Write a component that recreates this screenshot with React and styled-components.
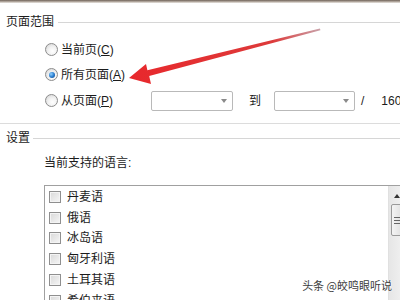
import React from "react";
import styled, { createGlobalStyle } from "styled-components";

const GlobalStyle = createGlobalStyle`
  html, body { margin: 0; padding: 0; background: #fff; }
  body {
    font-family: "Liberation Sans", "Noto Sans CJK SC", sans-serif;
    font-size: 12px;
    color: #1b1b1b;
  }
`;

const Page = styled.div`
  position: relative;
  width: 400px;
  height: 300px;
  overflow: hidden;
  background: #fff;
`;

const TopEdge = styled.div`
  height: 3px;
  background: linear-gradient(to bottom, #6f6258, #b9afa6 60%, #ece8e4);
`;

const GroupHeader = styled.div`
  display: flex;
  align-items: center;
  gap: ${(p) => p.$gap}px;
  height: 16px;
  padding-left: 6px;
  margin-top: ${(p) => p.$top}px;
`;

const HeaderText = styled.span`
  line-height: 16px;
  font-size: 12px;
`;

const HeaderLine = styled.div`
  flex: 1;
  height: 1px;
  background: #d6d6d6;
`;

const RadioGrid = styled.div`
  display: grid;
  grid-template-rows: 25px 25px 27px;
  margin-top: 7px;
`;

const Row = styled.div`
  display: flex;
  align-items: center;
  padding-left: 44px;
`;

const Radio = styled.span`
  position: relative;
  width: 11px;
  height: 11px;
  border-radius: 50%;
  border: 1px solid #8c8c8c;
  background: radial-gradient(circle at 60% 65%, #ffffff 0%, #f1f1f1 45%, #cfcfcf 100%);
  margin-right: 3px;
  margin-left: 1px;
  flex: none;
  display: flex;
  align-items: center;
  justify-content: center;
  &::after {
    content: "";
    display: ${(p) => (p.$checked ? "block" : "none")};
    width: 6px;
    height: 6px;
    border-radius: 50%;
    background: radial-gradient(circle at 35% 35%, #8fd0ff 0%, #2b7fd0 50%, #0e3f80 100%);
  }
`;

const Label = styled.span`
  line-height: 16px;
  min-width: ${(p) => p.$w || 0}px;
  u { text-decoration: underline; }
`;

const Combo = styled.div`
  width: ${(p) => p.$w}px;
  height: 20px;
  border: 1px solid #b9b9b9;
  border-radius: 2px;
  background: #fff;
  display: flex;
  align-items: center;
  justify-content: flex-end;
  padding-right: 5px;
  box-sizing: border-box;
  flex: none;
`;

const Caret = styled.span`
  width: 0;
  height: 0;
  border-left: 3.5px solid transparent;
  border-right: 3.5px solid transparent;
  border-top: 4px solid #8a8a8a;
`;

const Plain = styled.span`
  line-height: 16px;
  margin-left: ${(p) => p.$ml}px;
  margin-right: ${(p) => p.$mr || 0}px;
  flex: none;
`;

const Divider = styled.div`
  height: 1px;
  background: #dcdcdc;
  margin-top: 9px;
`;

const SubLabel = styled.div`
  margin-top: 9px;
  padding-left: 44px;
  line-height: 16px;
`;

const ListBox = styled.div`
  margin-top: 14px;
  margin-left: 44px;
  width: 362px;
  height: 140px;
  border: 1px solid #a0a0a0;
  border-right: none;
  box-sizing: border-box;
  display: grid;
  grid-template-columns: 1fr 18px;
  overflow: hidden;
`;

const Items = styled.div`
  padding-top: 0.6px;
  padding-left: 4px;
`;

const Item = styled.div`
  height: 20.75px;
  display: flex;
  align-items: center;
  gap: 6px;
`;

const Check = styled.span`
  width: 10px;
  height: 10px;
  border: 1px solid #8f8f8f;
  background: linear-gradient(135deg, #d9d9d9, #f6f6f6);
  box-shadow: inset 0 0 0 1px #f4f4f4;
  flex: none;
`;

const ItemText = styled.span`
  line-height: 16px;
`;

const ScrollTrack = styled.div`
  background: linear-gradient(to right, #e6e6e6, #f3f3f3);
  border-left: 1px solid #e0e0e0;
  display: flex;
  flex-direction: column;
  align-items: flex-start;
  padding-top: 8px;
`;

const UpArrow = styled.span`
  margin-left: 5px;
  width: 0;
  height: 0;
  border-left: 3px solid transparent;
  border-right: 3px solid transparent;
  border-bottom: 4px solid #333;
`;

const Thumb = styled.div`
  margin-top: 6px;
  margin-left: 2px;
  width: 14px;
  height: 32px;
  border: 1px solid #9a9a9a;
  border-radius: 2px;
  background: linear-gradient(to right, #f4f4f4, #dcdcdc);
  box-sizing: border-box;
  display: flex;
  flex-direction: column;
  justify-content: center;
  gap: 2px;
  padding-left: 2px;
  span {
    display: block;
    width: 6px;
    height: 1px;
    background: #666;
  }
`;

const Overlay = styled.svg`
  position: absolute;
  left: 0;
  top: 0;
  pointer-events: none;
`;

const Watermark = styled.div`
  position: absolute;
  right: 8px;
  bottom: 8px;
  font-size: 11px;
  line-height: 13px;
  color: #3c3c3c;
  font-family: "Noto Sans CJK SC", sans-serif;
  text-shadow: 0 0 2px #fff, 0 0 2px #fff;
`;

const languages = ["丹麦语", "俄语", "冰岛语", "匈牙利语", "土耳其语", "希伯来语"];

export default function App() {
  return (
    <Page>
      <GlobalStyle />
      <TopEdge />
      <GroupHeader $top={11} $gap={4}>
        <HeaderText>页面范围</HeaderText>
        <HeaderLine />
      </GroupHeader>
      <RadioGrid>
        <Row>
          <Radio />
          <Label>当前页(<u>C</u>)</Label>
        </Row>
        <Row>
          <Radio $checked />
          <Label>所有页面(<u>A</u>)</Label>
        </Row>
        <Row>
          <Radio />
          <Label $w={90}>从页面(<u>P</u>)</Label>
          <Combo $w={82}><Caret /></Combo>
          <Plain $ml={16}>到</Plain>
          <Combo $w={81} style={{ marginLeft: 13 }}><Caret /></Combo>
          <Plain $ml={6}>/</Plain>
          <Plain $ml={17}>160</Plain>
        </Row>
      </RadioGrid>
      <Divider />
      <GroupHeader $top={6} $gap={3}>
        <HeaderText>设置</HeaderText>
        <HeaderLine />
      </GroupHeader>
      <SubLabel>当前支持的语言:</SubLabel>
      <ListBox>
        <Items>
          {languages.map((l) => (
            <Item key={l}>
              <Check />
              <ItemText>{l}</ItemText>
            </Item>
          ))}
        </Items>
        <ScrollTrack>
          <UpArrow />
          <Thumb><span /><span /><span /></Thumb>
        </ScrollTrack>
      </ListBox>
      <Overlay width="400" height="300" viewBox="0 0 400 300">
        <defs>
          <linearGradient id="arrowFade" x1="129" y1="78" x2="320" y2="29" gradientUnits="userSpaceOnUse">
            <stop offset="0" stopColor="#e8282c" />
            <stop offset="0.75" stopColor="#dd3a3a" />
            <stop offset="1" stopColor="#c9a0a8" />
          </linearGradient>
        </defs>
        <polygon
          points="129,78 146,64 147.4,70.2 320,28.6 320.4,30.2 149.2,76 151,84"
          fill="url(#arrowFade)"
        />
      </Overlay>
      <Watermark>头条 @皎鸣眼听说</Watermark>
    </Page>
  );
}
